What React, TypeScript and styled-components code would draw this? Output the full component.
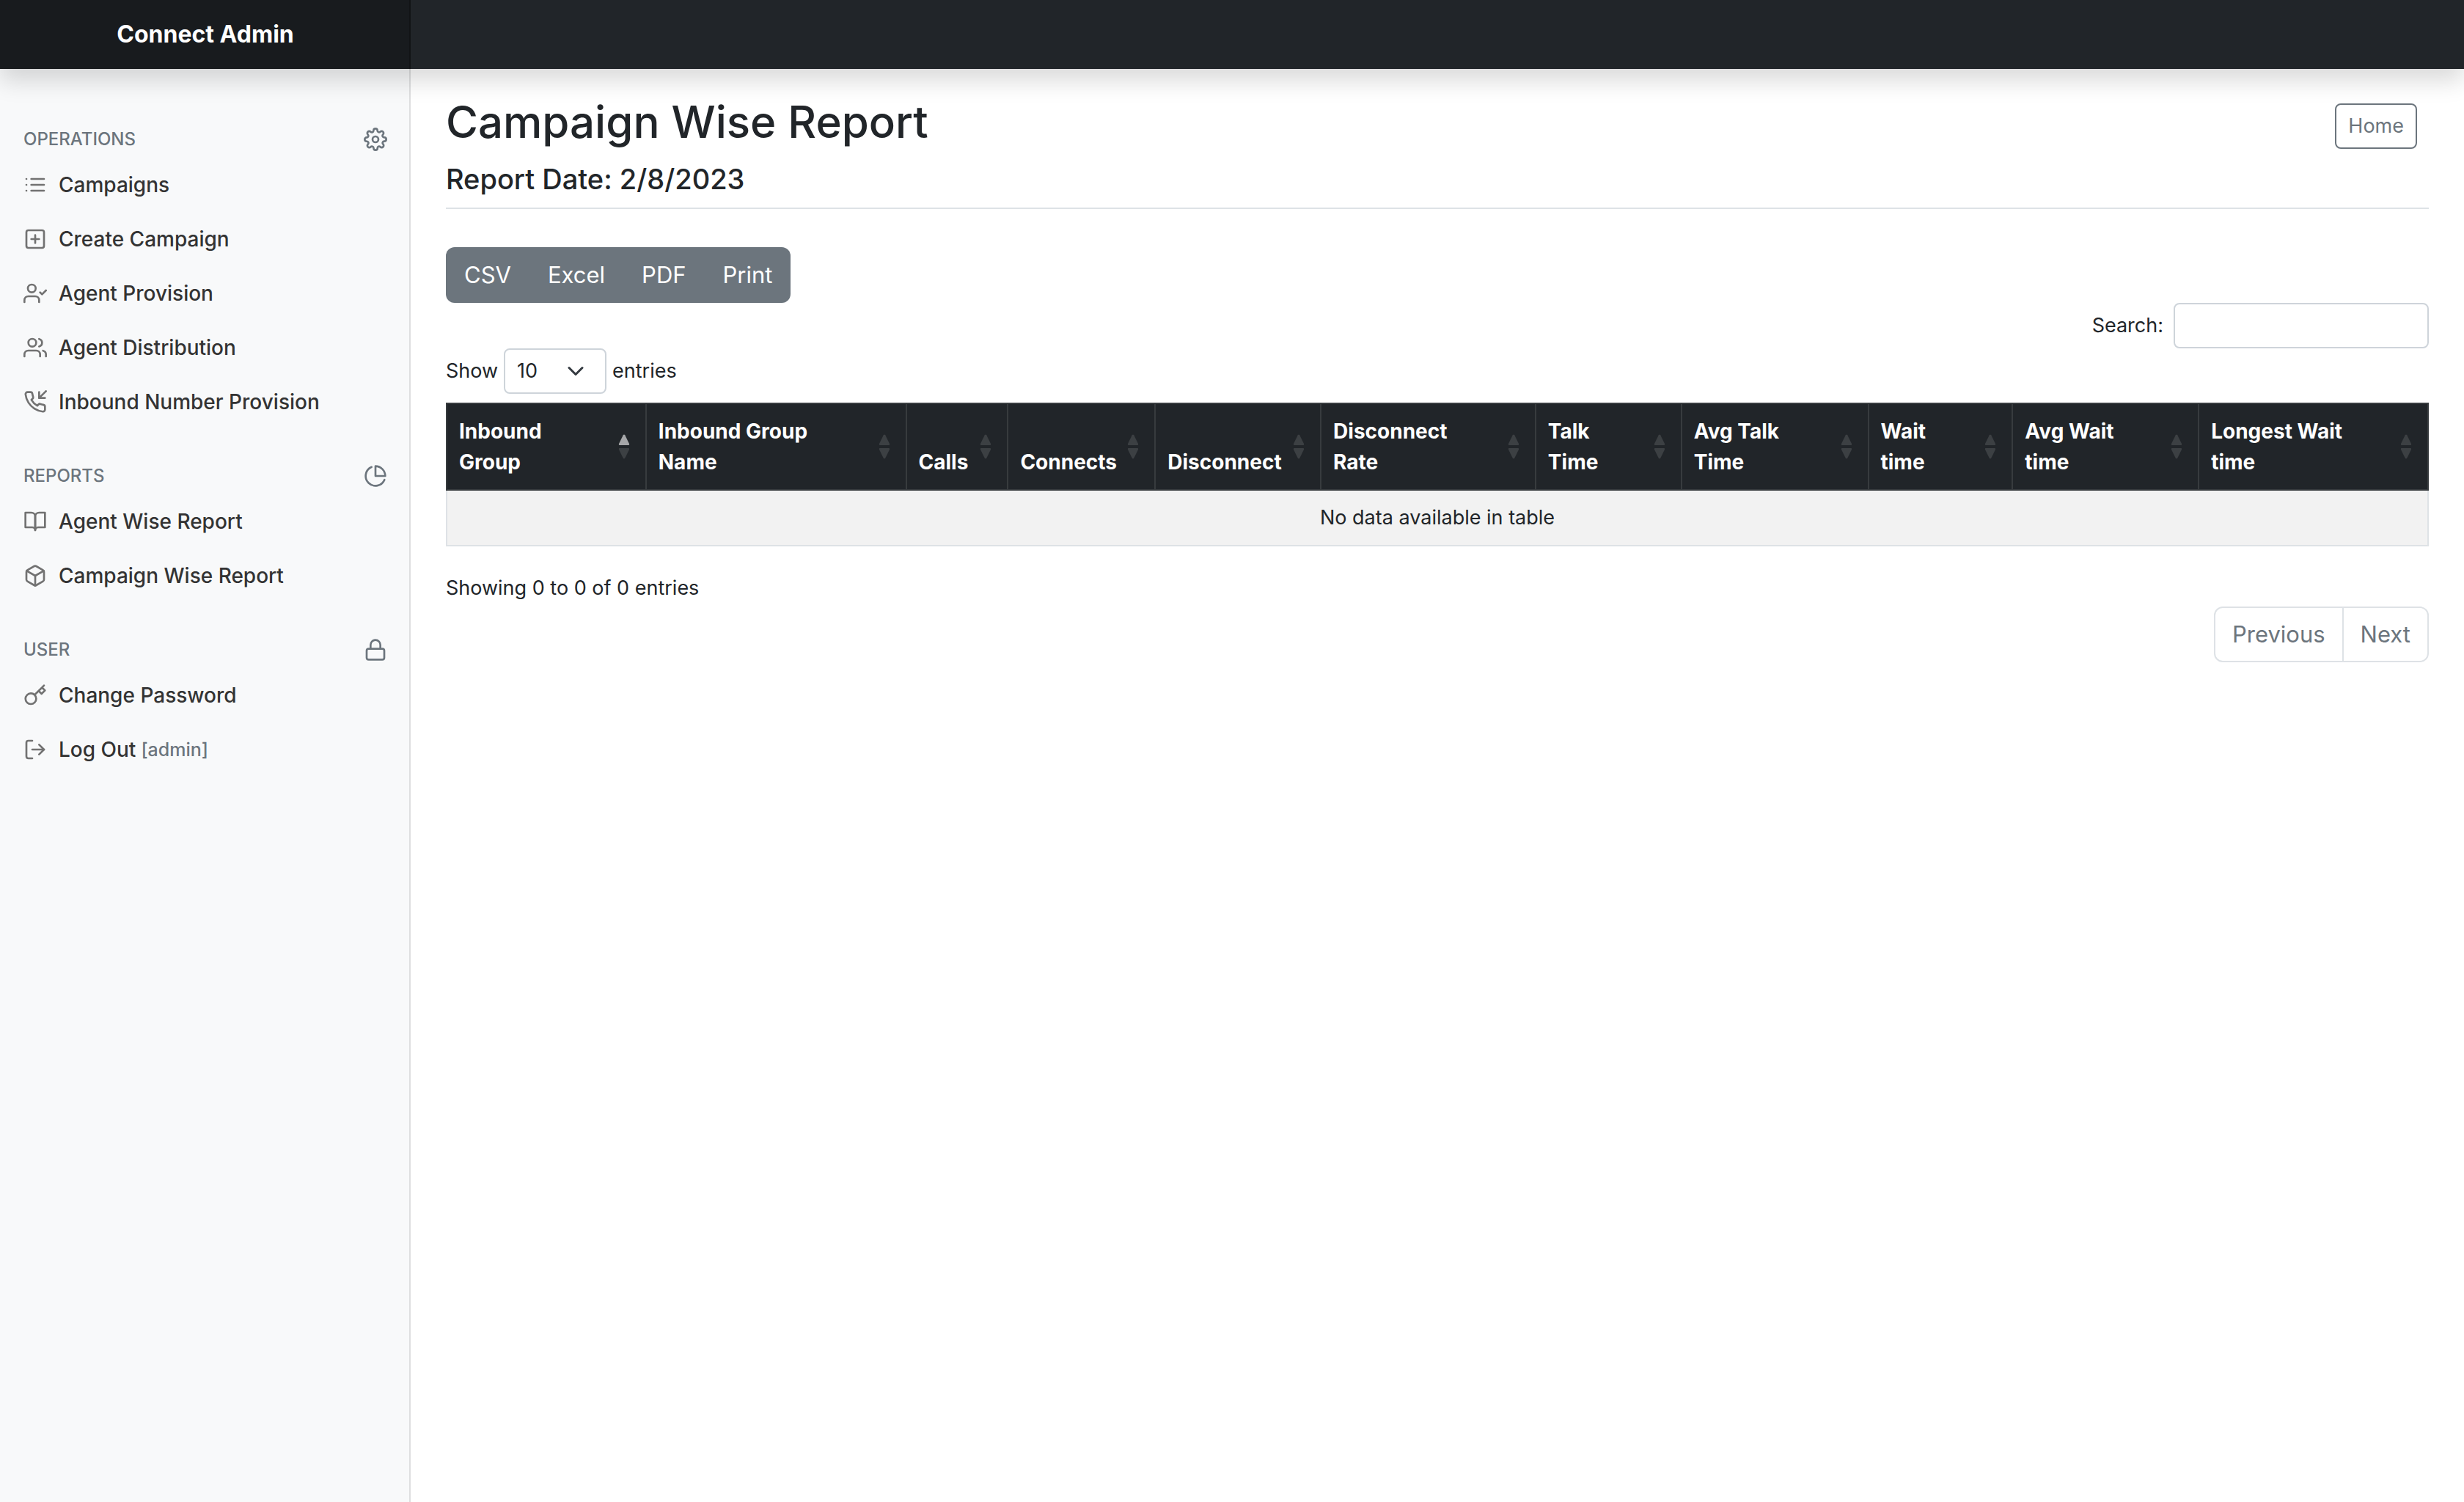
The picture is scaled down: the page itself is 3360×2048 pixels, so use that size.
import React from "react";
import styled, { createGlobalStyle } from "styled-components";
import type { IconType } from "react-icons";
import {
  FiBookOpen,
  FiBox,
  FiKey,
  FiList,
  FiLock,
  FiLogOut,
  FiPhoneIncoming,
  FiPieChart,
  FiPlusSquare,
  FiSettings,
  FiUserCheck,
  FiUsers,
} from "react-icons/fi";

const GlobalStyle = createGlobalStyle`
  *, *::before, *::after { box-sizing: border-box; }
  body {
    margin: 0;
    background: #fff;
    color: #212529;
    font-family: Inter, "Liberation Sans", sans-serif;
    font-size: 27px;
    line-height: 42px;
  }
  h1, h2, p, ul { margin: 0; padding: 0; font-weight: inherit; }
  ul { list-style: none; }
  button, input, select { font: inherit; color: inherit; }
  a { color: inherit; text-decoration: none; }
`;

const Page = styled.div`
  display: flex;
  flex-direction: column;
  min-height: 100vh;
`;

const TopBar = styled.header`
  position: sticky;
  top: 0;
  z-index: 10;
  display: flex;
  background: #212529;
  box-shadow: 0 16px 32px rgba(0, 0, 0, 0.15);
`;

const Brand = styled.a`
  width: calc(100% / 6);
  padding: 23px 32px;
  background: rgba(0, 0, 0, 0.25);
  box-shadow: inset -2px 0 0 rgba(0, 0, 0, 0.25);
  color: #fff;
  font-size: 32px;
  font-weight: 700;
  line-height: 48px;
  text-align: center;
`;

const Body = styled.div`
  display: flex;
  flex: 1;
`;

const Sidebar = styled.nav`
  width: calc(100% / 6);
  padding-top: 80px;
  background: #f8f9fa;
  box-shadow: inset -2px 0 0 rgba(0, 0, 0, 0.1);
`;

const NavSection = styled.section`
  margin-bottom: 48px;
`;

const NavHeading = styled.h2`
  display: flex;
  align-items: center;
  justify-content: space-between;
  padding: 0 32px;
  margin-bottom: 9px;
  color: #6c757d;
  font-size: 24px;
  font-weight: 500;
  line-height: 32px;
  text-transform: uppercase;
`;

const NavLink = styled.a`
  display: flex;
  align-items: center;
  gap: 16px;
  padding: 16px 32px;
  color: #333;
  font-size: 28px;
  font-weight: 500;

  svg { color: #727272; }
`;

const UserTag = styled.small`
  margin-left: -9px;
  color: #6c757d;
  font-size: 25px;
`;

const Main = styled.main`
  flex: 1;
  min-width: 0;
  padding: 34px 48px;
`;

const PageHead = styled.div`
  display: flex;
  justify-content: space-between;
  align-items: flex-start;
  padding-bottom: 15px;
  margin-bottom: 52px;
  border-bottom: 2px solid #dee2e6;
`;

const Title = styled.h1`
  margin-bottom: 16px;
  font-size: 60px;
  font-weight: 500;
  line-height: 76px;
`;

const Subtitle = styled.p`
  font-size: 38px;
  font-weight: 500;
  line-height: 48px;
`;

const HomeButton = styled.button`
  margin: 13px 16px 0 0;
  padding: 8px 16px;
  border: 2px solid #6c757d;
  border-radius: 8px;
  background: transparent;
  color: #6c757d;
`;

const ExportGroup = styled.div`
  display: inline-flex;
  overflow: hidden;
  border-radius: 12px;
  background: #6c757d;
`;

const ExportButton = styled.button`
  padding: 14px 25px;
  border: 0;
  background: transparent;
  color: #fff;
  font-size: 31px;
  line-height: 48px;
`;

const SearchRow = styled.div`
  display: flex;
  justify-content: flex-end;
`;

const FieldLabel = styled.label`
  display: flex;
  align-items: center;
  gap: 14px;
`;

const SearchInput = styled.input`
  width: 348px;
  height: 62px;
  padding: 8px 16px;
  border: 2px solid #ced4da;
  border-radius: 8px;
  background: #fff;
`;

const LengthLabel = styled.label`
  display: flex;
  align-items: center;
  gap: 8px;
  margin-bottom: 12px;
`;

const LengthSelect = styled.select`
  width: 140px;
  height: 62px;
  padding: 8px 16px;
  appearance: none;
  border: 2px solid #ced4da;
  border-radius: 8px;
  background: #fff
    url("data:image/svg+xml,%3Csvg xmlns='http://www.w3.org/2000/svg' viewBox='0 0 16 16'%3E%3Cpath fill='none' stroke='%23343a40' stroke-linecap='round' stroke-linejoin='round' stroke-width='2' d='M2 5l6 6 6-6'/%3E%3C/svg%3E")
    no-repeat right 24px center / 32px 24px;
`;

const Table = styled.table`
  width: 100%;
  table-layout: fixed;
  border-collapse: collapse;
`;

const HeadCell = styled.th`
  padding: 16px;
  border: 2px solid #373b3e;
  background: #212529;
  color: #fff;
  font-size: 28px;
  font-weight: 700;
  text-align: left;
  vertical-align: bottom;
`;

const HeadContent = styled.div`
  display: flex;
  align-items: flex-end;
  justify-content: space-between;
  height: 84px;
`;

const SortMark = styled.svg`
  flex: none;
  align-self: center;
  width: 16px;
  height: 34px;
  margin-right: 5px;
`;

const EmptyCell = styled.td`
  padding: 16px;
  border: 2px solid #dee2e6;
  background: #f2f2f2;
  text-align: center;
`;

const Info = styled.p`
  padding-top: 36px;
`;

const Pager = styled.div`
  display: flex;
  justify-content: flex-end;
  padding-top: 4px;
`;

const PagerButton = styled.button`
  padding: 12px 23px;
  border: 2px solid #dee2e6;
  background: #fff;
  color: #6c757d;
  font-size: 31px;
  line-height: 48px;

  &:first-child { border-radius: 12px 0 0 12px; }
  &:last-child { margin-left: -2px; border-radius: 0 12px 12px 0; }
`;

type Item = { label: string; icon: IconType; tag?: string };
type Section = { title: string; icon: IconType; items: Item[] };

const sections: Section[] = [
  {
    title: "Operations",
    icon: FiSettings,
    items: [
      { label: "Campaigns", icon: FiList },
      { label: "Create Campaign", icon: FiPlusSquare },
      { label: "Agent Provision", icon: FiUserCheck },
      { label: "Agent Distribution", icon: FiUsers },
      { label: "Inbound Number Provision", icon: FiPhoneIncoming },
    ],
  },
  {
    title: "Reports",
    icon: FiPieChart,
    items: [
      { label: "Agent Wise Report", icon: FiBookOpen },
      { label: "Campaign Wise Report", icon: FiBox },
    ],
  },
  {
    title: "User",
    icon: FiLock,
    items: [
      { label: "Change Password", icon: FiKey },
      { label: "Log Out", icon: FiLogOut, tag: "[admin]" },
    ],
  },
];

// Each column takes a share of the table's width.
const columns = [
  { lines: ["Inbound", "Group"], share: 272, sorted: true },
  { lines: ["Inbound Group", "Name"], share: 355 },
  { lines: ["Calls"], share: 139 },
  { lines: ["Connects"], share: 201 },
  { lines: ["Disconnect"], share: 226 },
  { lines: ["Disconnect", "Rate"], share: 293 },
  { lines: ["Talk", "Time"], share: 199 },
  { lines: ["Avg Talk", "Time"], share: 255 },
  { lines: ["Wait", "time"], share: 197 },
  { lines: ["Avg Wait", "time"], share: 254 },
  { lines: ["Longest Wait", "time"], share: 313 },
];
const totalShare = columns.reduce((sum, column) => sum + column.share, 0);

function SortArrows({ ascending }: { ascending?: boolean }) {
  return (
    <SortMark viewBox="0 0 16 34" aria-hidden="true">
      <path d="M6.8 1.2Q8 -.2 9.2 1.2L15 13Q15.6 15 14 15H2Q.4 15 1 13Z" fill="#fff" opacity={ascending ? 0.6 : 0.125} />
      <path d="M6.8 32.8Q8 34.2 9.2 32.8L15 21Q15.6 19 14 19H2Q.4 19 1 21Z" fill="#fff" opacity={0.125} />
    </SortMark>
  );
}

export default function App() {
  return (
    <Page>
      <GlobalStyle />
      <TopBar>
        <Brand href="#">Connect Admin</Brand>
      </TopBar>
      <Body>
        <Sidebar aria-label="Main">
          {sections.map(({ title, icon: SectionIcon, items }) => (
            <NavSection key={title}>
              <NavHeading>
                {title}
                <SectionIcon size={32} />
              </NavHeading>
              <ul>
                {items.map(({ label, icon: ItemIcon, tag }) => (
                  <li key={label}>
                    <NavLink href="#">
                      <ItemIcon size={32} />
                      {label}
                      {tag && <UserTag>{tag}</UserTag>}
                    </NavLink>
                  </li>
                ))}
              </ul>
            </NavSection>
          ))}
        </Sidebar>
        <Main>
          <PageHead>
            <div>
              <Title>Campaign Wise Report</Title>
              <Subtitle>Report Date: 2/8/2023</Subtitle>
            </div>
            <HomeButton type="button">Home</HomeButton>
          </PageHead>
          <ExportGroup>
            {["CSV", "Excel", "PDF", "Print"].map((format) => (
              <ExportButton key={format} type="button">
                {format}
              </ExportButton>
            ))}
          </ExportGroup>
          <SearchRow>
            <FieldLabel>
              Search:
              <SearchInput type="search" />
            </FieldLabel>
          </SearchRow>
          <LengthLabel>
            Show
            <LengthSelect defaultValue="10">
              <option>10</option>
              <option>25</option>
              <option>50</option>
              <option>100</option>
            </LengthSelect>
            entries
          </LengthLabel>
          <Table>
            <colgroup>
              {columns.map(({ lines, share }) => (
                <col key={lines.join(" ")} style={{ width: `${(share / totalShare) * 100}%` }} />
              ))}
            </colgroup>
            <thead>
              <tr>
                {columns.map(({ lines, sorted }) => (
                  <HeadCell key={lines.join(" ")} scope="col" aria-sort={sorted ? "ascending" : undefined}>
                    <HeadContent>
                      <span>
                        {lines.map((line, index) => (
                          <React.Fragment key={line}>
                            {index > 0 && <br />}
                            {line}
                          </React.Fragment>
                        ))}
                      </span>
                      <SortArrows ascending={sorted} />
                    </HeadContent>
                  </HeadCell>
                ))}
              </tr>
            </thead>
            <tbody>
              <tr>
                <EmptyCell colSpan={columns.length}>No data available in table</EmptyCell>
              </tr>
            </tbody>
          </Table>
          <Info>Showing 0 to 0 of 0 entries</Info>
          <Pager>
            <PagerButton type="button">Previous</PagerButton>
            <PagerButton type="button">Next</PagerButton>
          </Pager>
        </Main>
      </Body>
    </Page>
  );
}
